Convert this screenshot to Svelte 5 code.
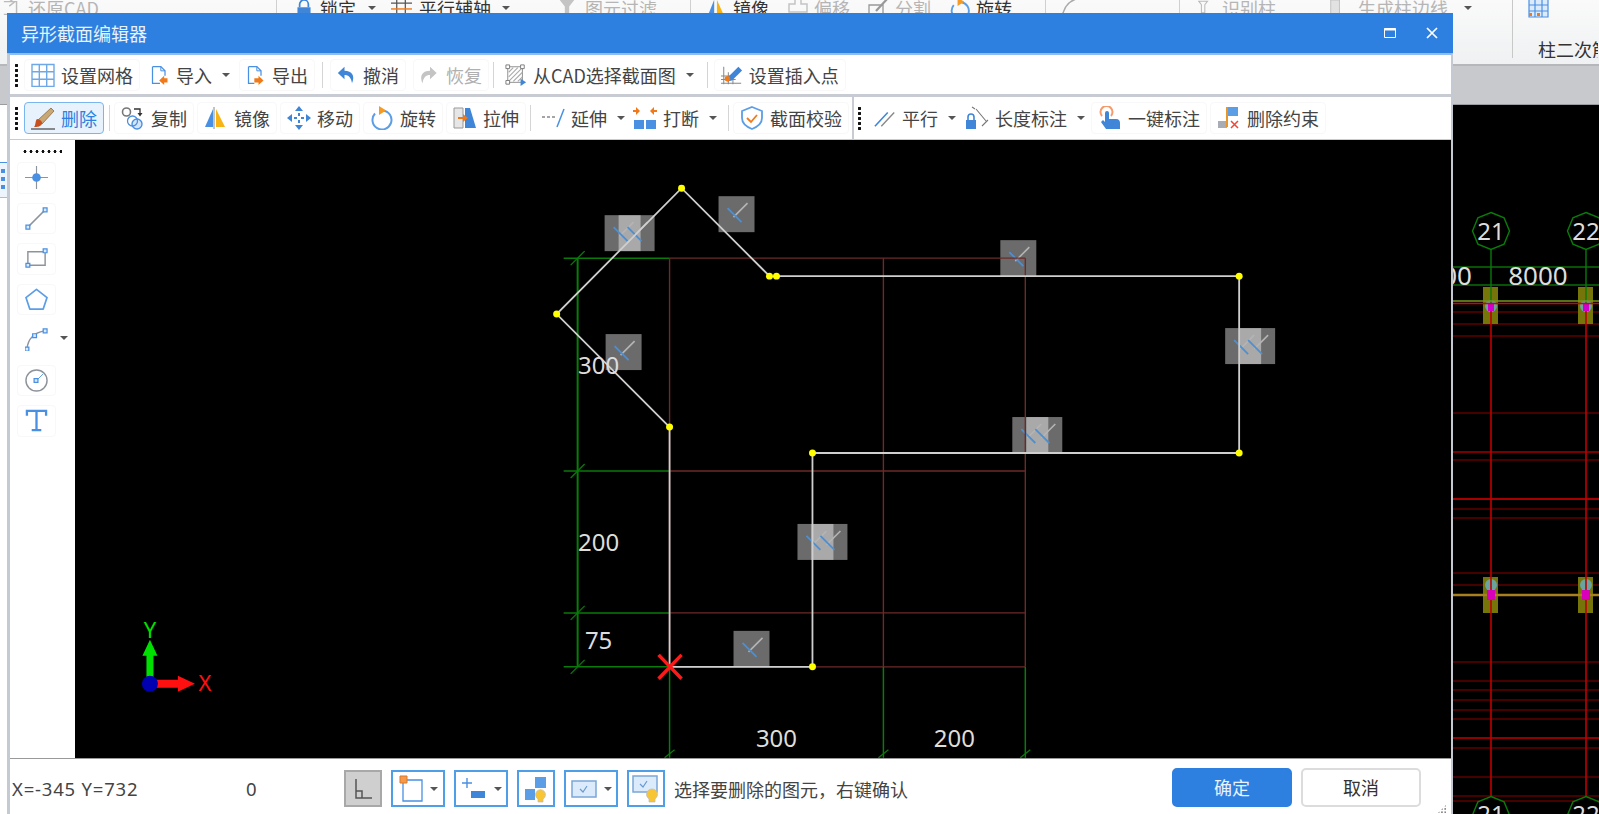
<script>
  // toolbar rows: sep / grip entries are layout only
  const row1 = [
    { t: 'grip' },
    { icon: 'grid', w: 24, label: '设置网格' },
    { icon: 'import', w: 20, label: '导入', caret: true },
    { icon: 'export', w: 20, label: '导出', ml: -1 },
    { t: 'sep', m: 4 },
    { icon: 'undo', w: 20, label: '撤消' },
    { icon: 'redo', w: 20, label: '恢复', off: true, ml: 4 },
    { t: 'sep', m: 1 },
    { icon: 'cad', w: 22, label: '从CAD选择截面图', caret: true },
    { t: 'sep', m: 3 },
    { icon: 'insert', w: 22, label: '设置插入点' }
  ];

  const row2 = [
    { t: 'grip' },
    { icon: 'brush', w: 24, label: '删除', active: true },
    { t: 'sep', m: 1.5 },
    { icon: 'copy', w: 24, label: '复制' },
    { icon: 'mirror', w: 24, label: '镜像' },
    { icon: 'move', w: 24, label: '移动' },
    { icon: 'rotate', w: 24, label: '旋转' },
    { icon: 'stretch', w: 24, label: '拉伸' },
    { t: 'sep', m: 1 },
    { icon: 'extend', w: 24, label: '延伸', caret: true, tight: true, ml: -1 },
    { icon: 'break', w: 24, label: '打断', caret: true, ml: -3 },
    { t: 'sep', m: 1 },
    { icon: 'shield', w: 24, label: '截面校验' },
    { t: 'bar' },
    { t: 'grip' },
    { icon: 'parallel', w: 22, label: '平行', caret: true, tight: true },
    { icon: 'length', w: 24, label: '长度标注', caret: true, tight: true, ml: -2 },
    { icon: 'touch', w: 24, label: '一键标注', ml: 2 },
    { icon: 'unbind', w: 24, label: '删除约束' }
  ];

  const sideTools = ['point', 'line', 'rect', 'polygon', 'arc', 'circle', 'text'];

  // ribbon cells: w is the cell width, up to the start of the next one
  const ribbon = [
    { w: 274, icon: 'restore', iw: 20, gap: 6, label: '还原CAD', off: true },
    { w: 20, sep: true },
    { w: 95, icon: 'lock', iw: 16, gap: 8, label: '锁定', caret: true },
    { w: 168, icon: 'axis', iw: 21, gap: 7, label: '平行辅轴', caret: true },
    { w: 131, icon: 'filter', iw: 16, gap: 10, label: '图元过滤', off: true },
    { w: 16, sep: true },
    { w: 81, icon: 'mirror', iw: 20, gap: 7, label: '镜像' },
    { w: 81, icon: 'offset', iw: 22, gap: 5, label: '偏移', off: true },
    { w: 81, icon: 'split', iw: 22, gap: 5, label: '分割', off: true },
    { w: 96, icon: 'turn', iw: 21, gap: 6, label: '旋转' },
    { w: 15, sep: true },
    { w: 119, icon: 'curve', iw: 22, gap: 0, label: '' },
    { w: 19, sep: true },
    { w: 132, icon: 'pillar', iw: 15, gap: 9, label: '识别柱', off: true },
    { w: 140, icon: 'edge', iw: 16, gap: 12, label: '生成柱边线', off: true, caret: true }
  ];

  // constraint markers, top-left corners in page coordinates
  const marks = [
    [604, 215], [618, 215], [718, 196], [605, 334], [1000, 240], [1225, 328], [1239, 328],
    [1012, 417], [1026, 417], [797, 524], [811, 524], [733, 631]
  ];
  const nodes = [
    [681, 188], [556, 314], [669, 427], [769, 276], [776, 276],
    [1239, 276], [1239, 453], [812, 453], [812, 667]
  ];
  const dimY = [258, 471, 613, 667];
  const dimX = [669, 883, 1025];
  const dims = [
    { x: 598, y: 374, s: '300' }, { x: 598, y: 551, s: '200' }, { x: 598, y: 649, s: '75' },
    { x: 776, y: 747, s: '300' }, { x: 954, y: 747, s: '200' }
  ];

  const cadLines = [
    { y: 267, c: '#0a6e0a', w: 1.4 }, { y: 285, c: '#0a6e0a', w: 1.4 }, { y: 312, c: '#8a0000', w: 1.2 },
    { y: 324, c: '#8a0000', w: 1.2 }, { y: 336, c: '#8a0000', w: 1.2 }, { y: 413, c: '#8a0000', w: 1.2 },
    { y: 452, c: '#a00000', w: 1.6 }, { y: 460, c: '#8a0000', w: 1.2 }, { y: 499, c: '#a80000', w: 2 },
    { y: 509, c: '#8a0000', w: 1.2 }, { y: 518, c: '#8a0000', w: 1.2 }, { y: 573, c: '#8a0000', w: 1.2 },
    { y: 585, c: '#8a0000', w: 1.2 }, { y: 662, c: '#8a0000', w: 1.2 }, { y: 681, c: '#8a0000', w: 1.2 },
    { y: 690, c: '#8a0000', w: 1.2 }, { y: 700, c: '#8a0000', w: 1.2 }, { y: 710, c: '#8a0000', w: 1.2 },
    { y: 719, c: '#8a0000', w: 1.2 }, { y: 738, c: '#c00000', w: 1.6 }, { y: 748, c: '#8a0000', w: 1.2 },
    { y: 777, c: '#8a0000', w: 1.2 }, { y: 796, c: '#8a0000', w: 1.2 }, { y: 801, c: '#8a0000', w: 1.2 }
  ];
  const columns = [1491, 1586];

  function octagon(cx, cy, r) {
    const pts = [];
    for (let i = 0; i < 8; i++) {
      const a = -Math.PI / 2 + (i * Math.PI) / 4;
      pts.push(`${(cx + r * Math.cos(a)).toFixed(1)},${(cy + r * Math.sin(a)).toFixed(1)}`);
    }
    return pts.join(' ');
  }
</script>

{#snippet ribbonIcon(name)}
  <svg class="ribbon-ico" viewBox="0 0 22 22" aria-hidden="true">
    {#if name === 'restore'}
      <path d="M2 4h14v14H2M8 1l5 4-5 4" fill="none" stroke="#bbb" stroke-width="1.6" />
    {:else if name === 'lock'}
      <path d="M5 10V6a6 6 0 0 1 12 0v4" fill="none" stroke="#3f86d8" stroke-width="2.4" />
      <path d="M2 10h18v12H2z" fill="#3f86d8" />
    {:else if name === 'axis'}
      <path d="M6 0v22M15 0v22M0 6h22" stroke="#555" stroke-width="1.3" />
      <path d="M0 12h22" stroke="#f07a1a" stroke-width="1.5" />
    {:else if name === 'filter'}
      <path d="M1 0h20l-7 9v13H8V9z" fill="#c4c4c4" />
    {:else if name === 'mirror'}
      <path d="M9 2v20H1z" fill="#4a90e2" />
      <path d="M12 2v20h9z" fill="#f8b315" />
    {:else if name === 'offset'}
      <path d="M8 1h6v6h6v8H2V7h6z" fill="none" stroke="#c4c4c4" stroke-width="1.5" />
    {:else if name === 'split'}
      <path d="M1 8h14v10H1z" fill="none" stroke="#999" stroke-width="1.3" />
      <path d="M8 14 20 1" stroke="#999" stroke-width="2.2" />
    {:else if name === 'turn'}
      <path d="M13 5a9 9 0 1 1-8 3" fill="none" stroke="#5b9ee6" stroke-width="2" />
      <path d="M9 0l7 4.500L9 9z" fill="#f59a23" />
    {:else if name === 'curve'}
      <path d="M2 22C3 10 9 3 20 1" fill="none" stroke="#aaa" stroke-width="1.5" />
    {:else if name === 'pillar'}
      <path d="M1 1h13l-4 5v12H5V6z" fill="none" stroke="#bbb" stroke-width="1.5" />
    {:else if name === 'edge'}
      <path d="M1 0h12v20H1z" fill="#e2e2e2" stroke="#bbb" stroke-width="1.2" />
    {/if}
  </svg>
{/snippet}

{#snippet icon(name)}
  <svg class="ico" viewBox="0 0 24 24" aria-hidden="true">
    {#if name === 'grid'}
      <path d="M1 1.500h22v22H1zM8.300 1.500v22M15.700 1.500v22M1 8.800h22M1 16.200h22" fill="none" stroke="#6ea8e6" stroke-width="1.4" />
    {:else if name === 'import'}
      <path d="M3 2h10l5 5v6M3 2v20h9" fill="none" stroke="#4a90e2" stroke-width="1.5" />
      <path d="M13 2v5h5" fill="none" stroke="#4a90e2" stroke-width="1.2" />
      <path d="M21 16h-4v-3l-6 5.500 6 5.500v-3h4z" fill="#f07a1a" />
    {:else if name === 'export'}
      <path d="M3 2h10l5 5v6M3 2v20h7" fill="none" stroke="#4a90e2" stroke-width="1.5" />
      <path d="M13 2v5h5" fill="none" stroke="#4a90e2" stroke-width="1.2" />
      <path d="M10 16h5v-3l6 5.500-6 5.500v-3h-5z" fill="#f07a1a" />
    {:else if name === 'undo'}
      <path d="M9 2 1 9.500 9 17v-5c5 0 8 3 9 10 4-9 0-15-9-15z" fill="#3f86d8" />
    {:else if name === 'redo'}
      <path d="M12 2l8 7.500-8 7.500v-5c-5 0-8 3-9 10-4-9 0-15 9-15z" fill="#c4c4c4" />
    {:else if name === 'cad'}
      <path d="M3 3h16v17H3z" fill="none" stroke="#888" stroke-width="1" />
      <path d="M4 9l5-5M4 14l10-10M4 19 19 4M9 19l10-10M14 19l5-5" stroke="#aaa" stroke-width="1.2" />
      <path d="M1 1h4v4H1zM17 1h4v4h-4zM1 18h4v4H1z" fill="#fff" stroke="#777" stroke-width="1" />
      <path d="M17 16l6 4-6 4z" fill="#3f86d8" />
    {:else if name === 'insert'}
      <path d="M3 3v19M8 9v13M13 14v8M0 21h22M0 17h16M0 13h10" stroke="#888" stroke-width="1.1" />
      <path d="M8 14 19 3l4 4-11 11-5 1z" fill="#3f86d8" />
      <circle cx="7" cy="16" r="3" fill="#f07a1a" />
    {:else if name === 'brush'}
      <path d="M7 14 20 2l3 3-12 13z" fill="#c9a877" stroke="#8b6b3a" stroke-width=".8" />
      <path d="M6 13c3 0 6 3 5 5-2 3-5 3-8 3 2-2 1-6 3-8z" fill="#c8501e" />
      <path d="M0 23h24" stroke="#444" stroke-width="1.2" />
    {:else if name === 'copy'}
      <circle cx="5.500" cy="6" r="4" fill="none" stroke="#777" stroke-width="1.6" />
      <circle cx="16" cy="18" r="5" fill="#d5e6f8" stroke="#4a90e2" stroke-width="1.4" />
      <circle cx="11.500" cy="15" r="5" fill="none" stroke="#4a90e2" stroke-width="1.3" />
      <path d="M13 3h6v5" fill="none" stroke="#333" stroke-width="1.3" />
      <path d="M16.500 7h5L19 10.500z" fill="#333" />
    {:else if name === 'mirror'}
      <path d="M10 1v22" stroke="#888" stroke-width="1" />
      <path d="M9 3v18H1z" fill="#4a90e2" />
      <path d="M12 3v18h9z" fill="#f8b315" />
    {:else if name === 'move'}
      <path d="M12 0l4 5H8zM12 24l4-5H8zM0 12l5-4v8zM24 12l-5-4v8z" fill="#3f86d8" />
      <path d="M12 7v3M12 14v3M7 12h3M14 12h3" stroke="#3f86d8" stroke-width="2" />
    {:else if name === 'rotate'}
      <path d="M13 4.500a9.500 9.500 0 1 1-8 3" fill="none" stroke="#5b9ee6" stroke-width="2" />
      <path d="M9 0l7 4.500L9 9z" fill="#f59a23" />
    {:else if name === 'stretch'}
      <path d="M1 2h9v20H1z" fill="#e6e6e6" stroke="#999" stroke-width="1" />
      <path d="M12 2h5l6 20H12z" fill="#3f86d8" />
      <path d="M5 12h6" stroke="#f07a1a" stroke-width="2" />
      <path d="M10 8l5 4-5 4z" fill="#f07a1a" />
    {:else if name === 'extend'}
      <path d="M1 11h15" stroke="#888" stroke-width="1.3" stroke-dasharray="3 2" />
      <path d="M16 21 23 3" stroke="#4a90e2" stroke-width="1.5" />
    {:else if name === 'break'}
      <path d="M1 14h10v9H1zM13 14h10v9H13z" fill="#4a90e2" />
      <path d="M0 5h3V2l4 4-4 4V7H0zM24 5h-3V2l-4 4 4 4V7h3z" fill="#f07a1a" transform="translate(0 -1)" />
    {:else if name === 'shield'}
      <path d="M12 1l10 4v7c0 6-5 9-10 11C7 21 2 18 2 12V5z" fill="none" stroke="#5b9ee6" stroke-width="1.8" />
      <path d="M7 12l4 4 6-7" fill="none" stroke="#f07a1a" stroke-width="1.8" />
    {:else if name === 'parallel'}
      <path d="M1 21 15 6" stroke="#3f86d8" stroke-width="1.7" />
      <path d="M8 21 22 6" stroke="#888" stroke-width="1.5" />
    {:else if name === 'length'}
      <path d="M1 14h10v9H1z" fill="#3f86d8" />
      <path d="M3 14v-3a3 3 0 0 1 6 0v3" fill="none" stroke="#3f86d8" stroke-width="1.6" />
      <path d="M7 1l3 2M11 3l10 12M17 20l6-6" stroke="#777" stroke-width="1.1" fill="none" />
    {:else if name === 'touch'}
      <path d="M4 10a6 6 0 1 1 9 0" fill="none" stroke="#f59a6a" stroke-width="2" />
      <path d="M7 7a2 2 0 0 1 4 0v6h7c3 0 4 2 4 4v6H8L3 16l2-2 2 2z" fill="#3f86d8" />
    {:else if name === 'unbind'}
      <path d="M1 15h9v7H1z" fill="#a8acb4" />
      <path d="M10 1v20" stroke="#e8962a" stroke-width="2" />
      <path d="M11 1h10v9H11z" fill="#5b9ee6" />
      <path d="M14 15l7 7M21 15l-7 7" stroke="#e84a3a" stroke-width="1.5" />
    {/if}
  </svg>
{/snippet}

{#snippet sideIcon(name)}
  <svg class="side-ico" viewBox="0 0 24 24" aria-hidden="true">
    {#if name === 'point'}
      <path d="M12 0v24M0 12h24" stroke="#8d939b" stroke-width="1.2" />
      <circle cx="12" cy="12" r="4.500" fill="#4a90e2" />
    {:else if name === 'line'}
      <path d="M3 21 21 3" stroke="#8d939b" stroke-width="1.5" />
      <path d="M1 19h4v4H1zM19 1h4v4h-4z" fill="#dcebfb" stroke="#4a90e2" stroke-width="1.3" />
    {:else if name === 'rect'}
      <path d="M3 5h18v14H3z" fill="none" stroke="#8d939b" stroke-width="1.5" />
      <path d="M1 17h4v4H1zM19 2h4v4h-4z" fill="#dcebfb" stroke="#4a90e2" stroke-width="1.3" />
    {:else if name === 'polygon'}
      <path d="M12 1.500 23 10l-4 12H5L1 10z" fill="none" stroke="#5b9ee6" stroke-width="1.8" stroke-linejoin="round" />
    {:else if name === 'arc'}
      <path d="M2 22C3 12 9 5 20 3" fill="none" stroke="#8d939b" stroke-width="1.5" />
      <path d="M0 20h4v4H0zM8 6h4v4H8zM19 1h4v4h-4z" fill="#dcebfb" stroke="#4a90e2" stroke-width="1.3" />
    {:else if name === 'circle'}
      <circle cx="12" cy="12" r="11" fill="none" stroke="#8d939b" stroke-width="1.5" />
      <path d="M12 12l7-7" stroke="#5b9ee6" stroke-width="1" />
      <path d="M9.500 10h4v4h-4z" fill="#dcebfb" stroke="#4a90e2" stroke-width="1.3" />
    {:else if name === 'text'}
      <path d="M2 7V2h20v5M12 2v20M7 22h10" fill="none" stroke="#4a90e2" stroke-width="2.4" />
    {/if}
  </svg>
{/snippet}

{#snippet toolbar(items)}
  {#each items as item}
    {#if item.t === 'grip'}
      <span class="grip"></span>
    {:else if item.t === 'sep'}
      <span class="sep" style="margin: 0 {item.m}px"></span>
    {:else if item.t === 'bar'}
      <span class="bar"></span>
    {:else}
      <div
        class="tool"
        class:active={item.active}
        class:off={item.off}
        class:plain={item.caret}
        class:tight={item.tight}
        style="margin-left: {item.ml || 0}px"
      >
        <span class="tool-icon" style="width: {item.w}px">{@render icon(item.icon)}</span>
        <span>{item.label}</span>
        {#if item.caret}<span class="caret"></span>{/if}
      </div>
    {/if}
  {/each}
{/snippet}

<div class="screen">
  <!-- application behind the dialog -->
  <header class="ribbon">
    <div class="ribbon-row">
      {#each ribbon as r}
        {#if r.sep}
          <span class="ribbon-sep" style="width: {r.w}px"></span>
        {:else}
          <div class="ribbon-item" class:off={r.off} style="width: {r.w}px; gap: {r.gap}px">
            <span class="ribbon-icon" style="width: {r.iw}px">{@render ribbonIcon(r.icon)}</span>
            <span>{r.label}</span>
            {#if r.caret}<span class="caret"></span>{/if}
          </div>
        {/if}
      {/each}
      <div class="ribbon-right">
        <svg width="22" height="18" viewBox="0 0 22 18" aria-hidden="true">
          <path d="M1 0v17h19V0M1 5h19M1 11h19M7 0v17M14 0v17" fill="#dcebfb" stroke="#4a90e2" stroke-width="1.2" />
          <path d="M9 13h3v3H9zM1 13h3v3H1z" fill="#f07a1a" />
        </svg>
        <span class="ribbon-label">柱二次筋</span>
      </div>
    </div>
  </header>
  <div class="band"></div>
  <main class="main">
    <aside class="strip">
      <div class="strip-panel"><i></i><i></i><i></i></div>
    </aside>
    <svg class="cad" viewBox="1452 105 147 709" aria-hidden="true">
      {#each cadLines as l}
        <line x1="1452" x2="1599" y1={l.y} y2={l.y} stroke={l.c} stroke-width={l.w} />
      {/each}
      {#each columns as x}
        <rect x={x - 8} y="287" width="15" height="37" fill="#75750a" />
        <rect x={x - 8} y="577" width="15" height="36" fill="#75750a" />
        <circle cx={x} cy="306" r="6" fill="#6aa3a0" />
        <circle cx={x} cy="585" r="6" fill="#6aa3a0" />
        <line x1={x} x2={x} y1="249" y2="303" stroke="#0a7a0a" stroke-width="1.4" />
        <line x1={x} x2={x} y1="303" y2="796" stroke="#c00000" stroke-width="1.6" />
        <rect x={x - 3} y="303" width="6" height="8" fill="#d000d0" />
        <polygon points={octagon(x, 231, 18.500)} fill="#000" stroke="#0a7a0a" stroke-width="1.4" />
        <polygon points={octagon(x, 815, 18.500)} fill="#000" stroke="#0a7a0a" stroke-width="1.4" />
      {/each}
      <line x1="1452" x2="1599" y1="301" y2="301" stroke="#6f9a1e" stroke-width="1.4" />
      <line x1="1452" x2="1599" y1="303.500" y2="303.500" stroke="#d80000" stroke-width="1.6" />
      <line x1="1452" x2="1599" y1="595" y2="595" stroke="#a8801e" stroke-width="2.4" />
      {#each columns as x}
        <rect x={x - 4} y="590" width="8" height="10" fill="#d800b8" />
      {/each}
      <text class="cad-text axis" x="1491" y="240">21</text>
      <text class="cad-text axis" x="1586" y="240">22</text>
      <text class="cad-text axis" x="1491" y="823">21</text>
      <text class="cad-text axis" x="1586" y="823">22</text>
      <text class="cad-text span" x="1538" y="285">8000</text>
      <text class="cad-text span" x="1457" y="285">00</text>
    </svg>
  </main>

  <section class="dialog">
    <div class="titlebar">
      <span>异形截面编辑器</span>
      <div class="win-btns">
        <svg width="12" height="10" viewBox="0 0 12 10" aria-hidden="true">
          <path d="M.5 .5h11v9H.5z" fill="none" stroke="#fff" stroke-width="1" />
          <path d="M0 1.500h12" stroke="#fff" stroke-width="2" />
        </svg>
        <svg width="12" height="12" viewBox="0 0 12 12" aria-hidden="true">
          <path d="M1 1l10 10M11 1 1 11" stroke="#fff" stroke-width="1.700" />
        </svg>
      </div>
    </div>
    <div class="content">
      <div class="tb tb1">{@render toolbar(row1)}</div>
      <div class="tb tb2">{@render toolbar(row2)}</div>
      <div class="work">
        <nav class="side">
          <span class="dots"></span>
          {#each sideTools as s}
            <div class="side-tool" class:flat={s === 'arc'}>
              {@render sideIcon(s)}
              {#if s === 'arc'}<span class="caret side-caret"></span>{/if}
            </div>
          {/each}
        </nav>
        <svg class="canvas" viewBox="74 140 1377 618" aria-hidden="true">
          {#each marks as m}
            <rect x={m[0]} y={m[1]} width="36" height="36" fill="#fff" opacity=".42" />
          {/each}
          {#each marks as m}
            <line x1={m[0] + 15} y1={m[1] + 21} x2={m[0] + 29} y2={m[1] + 7} stroke="#b4b4b4" stroke-width="1.6" />
            <line x1={m[0] + 9} y1={m[1] + 12} x2={m[0] + 23} y2={m[1] + 26} stroke="#4f8fd0" stroke-width="1.8" />
          {/each}

          {#each dimY as y}
            <line x1="669" x2="1025" y1={y} y2={y} stroke="#6e2a2a" stroke-width="1.4" />
            <line x1="563" x2="669" y1={y} y2={y} stroke="#0a7a0a" stroke-width="1.5" />
            <line x1="570" y1={y + 7} x2="584" y2={y - 7} stroke="#0a7a0a" stroke-width="1.3" />
          {/each}
          {#each dimX as x}
            <line x1={x} x2={x} y1="258" y2="667" stroke="#6e2a2a" stroke-width="1.4" />
            <line x1={x} x2={x} y1="667" y2="758" stroke="#0a7a0a" stroke-width="1.5" />
            <line x1={x - 5} y1="758" x2={x + 5} y2="750" stroke="#0a7a0a" stroke-width="1.3" />
          {/each}
          <line x1="577" x2="577" y1="258" y2="667" stroke="#0a7a0a" stroke-width="2" />

          <polyline points="669,667 669,427 556,314 681,188 769,276" fill="none" stroke="#cfcfcf" stroke-width="1.8" />
          <polyline points="776,276 1239,276 1239,453 812,453 812,667 669,667" fill="none" stroke="#cfcfcf" stroke-width="1.8" />
          {#each nodes as n}
            <circle cx={n[0]} cy={n[1]} r="3.500" fill="#ffff00" />
          {/each}
          <path d="M658 655l23 24M681 655l-23 24" stroke="#ff1a1a" stroke-width="3.500" />

          {#each dims as d}
            <text class="cad-text dim" x={d.x} y={d.y}>{d.s}</text>
          {/each}

          <path d="M145.500 684V656h-4l7.500-16 7.500 16h-4v28z" fill="#00e000" />
          <path d="M149 680h28v-4l17 8-17 8v-4h-28z" fill="#ff1010" />
          <circle cx="149" cy="684" r="8" fill="#0000b0" />
          <text class="axis-label" x="149" y="638" fill="#00e000">Y</text>
          <text class="axis-label" x="204" y="691" fill="#ff1010">X</text>
        </svg>
      </div>
      <footer class="status">
        <span class="coords">X=-345 Y=732</span>
        <span class="zero">0</span>
        <div class="status-btns">
          <div class="sbtn pressed narrow">
            <svg width="20" height="22" viewBox="0 0 20 22" aria-hidden="true">
              <path d="M3 1v19h16M3 13h6v7" fill="none" stroke="#555" stroke-width="1.5" />
            </svg>
          </div>
          <div class="sbtn">
            <svg width="24" height="28" viewBox="0 0 24 28" aria-hidden="true">
              <path d="M4 5h19v21H4z" fill="none" stroke="#4a90e2" stroke-width="1.3" />
              <path d="M1 1h7v7H1z" fill="#f59a4a" stroke="#d87a2a" stroke-width="1" />
            </svg>
            <span class="caret"></span>
          </div>
          <div class="sbtn">
            <svg width="26" height="26" viewBox="0 0 26 26" aria-hidden="true">
              <path d="M6 2v10M1 7h10" stroke="#4a90e2" stroke-width="1.4" />
              <path d="M10 15h14v7H10z" fill="#3f86d8" />
            </svg>
            <span class="caret"></span>
          </div>
          <div class="sbtn narrow">
            <svg width="26" height="28" viewBox="0 0 26 28" aria-hidden="true">
              <path d="M12 2h11v11H12zM2 14h10v11H2z" fill="#5b9ee6" />
              <path d="M15 24a5 5 0 1 1 5 0v3h-5z" fill="#f8c534" stroke="#bbb" stroke-width=".7" />
            </svg>
          </div>
          <div class="sbtn">
            <svg width="26" height="20" viewBox="0 0 26 20" aria-hidden="true">
              <path d="M1 2h24v16H1z" fill="#dcebfb" stroke="#7aa7d8" stroke-width="1.5" />
              <path d="M9 10l3 3 4-6" fill="none" stroke="#6a9ad0" stroke-width="1.2" />
            </svg>
            <span class="caret"></span>
          </div>
          <div class="sbtn narrow">
            <svg width="28" height="30" viewBox="0 0 28 30" aria-hidden="true">
              <path d="M1 2h24v16H1z" fill="#dcebfb" stroke="#7aa7d8" stroke-width="1.5" />
              <path d="M8 10l3 3 4-6" fill="none" stroke="#6a9ad0" stroke-width="1.2" />
              <path d="M17 25a5.500 5.500 0 1 1 6 0v3h-6z" fill="#f8c534" stroke="#bbb" stroke-width=".7" />
            </svg>
          </div>
        </div>
        <span class="hint">选择要删除的图元，右键确认</span>
        <div class="actions">
          <button class="btn primary" type="button">确定</button>
          <button class="btn" type="button">取消</button>
        </div>
        <span class="resize"></span>
      </footer>
    </div>
  </section>
</div>

<style>
  :global(body) {
    margin: 0;
    overflow: hidden;
  }

  .screen {
    position: relative;
    width: 1599px;
    height: 814px;
    overflow: hidden;
    display: flex;
    flex-direction: column;
    background: #fff;
    font-family: 'Noto Sans CJK SC', 'Noto Sans', sans-serif;
    font-size: 18px;
    color: #444;
  }

  /* ribbon behind the dialog, mostly hidden */
  .ribbon {
    flex: 0 0 66px;
    box-sizing: border-box;
    overflow: hidden;
    background: linear-gradient(#fafafa, #eff1f2);
    border-bottom: 2px solid #b5b7ba;
  }

  .ribbon-row {
    display: flex;
    align-items: flex-start;
    padding-left: 2px;
    height: 64px;
  }

  .ribbon-item {
    flex: none;
    display: flex;
    align-items: center;
    margin-top: -5px;
    height: 26px;
    color: #333;
    white-space: nowrap;
  }

  .ribbon-item.off {
    color: #b5b5b5;
  }

  .ribbon-icon {
    flex: none;
  }

  .ribbon-ico {
    display: block;
    width: 100%;
    height: 22px;
  }

  .ribbon-sep {
    flex: none;
    box-sizing: border-box;
    height: 30px;
    border-left: 1px solid #d0d0d0;
  }

  .ribbon-right {
    flex: none;
    align-self: stretch;
    width: 86px;
    margin: 0 0 6px 42px;
    box-sizing: border-box;
    border-left: 1px solid #c8c8c8;
    padding-left: 15px;
    overflow: hidden;
  }

  .ribbon-right svg {
    display: block;
  }

  .ribbon-label {
    display: block;
    margin: 19px 0 0 10px;
    line-height: 24px;
    white-space: nowrap;
    color: #333;
  }

  .band {
    flex: 0 0 39px;
    background: #c7c9cc;
    border-bottom: 1px solid #9a9c9f;
    box-sizing: border-box;
  }

  .main {
    flex: 1;
    display: flex;
    min-height: 0;
  }

  .strip {
    flex: 0 0 1452px;
    background: #fff;
  }

  .strip-panel {
    margin-top: 57px;
    width: 7px;
    height: 36px;
    box-sizing: border-box;
    border-top: 1px solid #4a90e2;
    border-bottom: 1px solid #bbb;
    display: flex;
    flex-direction: column;
    gap: 4px;
    padding-top: 6px;
    background: #eef4fb;
  }

  .strip-panel i {
    width: 4px;
    height: 4px;
    margin-left: 1px;
    background: #4a90e2;
  }

  .cad {
    flex: 1;
    display: block;
    background: #000;
  }

  .cad-text {
    font-family: 'Noto Sans', sans-serif;
    text-anchor: middle;
    fill: #ddd;
  }

  .cad-text.axis {
    font-size: 24px;
  }

  .cad-text.span {
    font-size: 26px;
  }

  .cad-text.dim {
    font-size: 24px;
  }

  .axis-label {
    font-family: 'Noto Sans', sans-serif;
    font-size: 22px;
    text-anchor: middle;
  }

  /* dialog */
  .dialog {
    position: absolute;
    left: 7px;
    top: 13px;
    width: 1446px;
    height: 801px;
    display: flex;
    flex-direction: column;
  }

  .titlebar {
    flex: 0 0 40px;
    display: flex;
    align-items: center;
    justify-content: space-between;
    box-sizing: border-box;
    padding: 0 15px 0 14px;
    background: #2d7fe0;
    color: #e8f2fc;
  }

  .win-btns {
    display: flex;
    align-items: center;
    gap: 30px;
  }

  .content {
    flex: 1;
    display: flex;
    flex-direction: column;
    min-height: 0;
    box-sizing: border-box;
    border-left: 3px solid #c5cad2;
    border-right: 2px solid #c5cad2;
    background: #fff;
    border-top: 2px solid #8fbdf0;
  }

  .tb {
    display: flex;
    align-items: center;
    gap: 3px;
    box-sizing: border-box;
    padding-left: 5px;
    background: #fff;
  }

  .tb1 {
    flex: 0 0 42px;
    border-bottom: 3px solid #c8ccd2;
  }

  .tb2 {
    flex: 0 0 43px;
    border-bottom: 1px solid #c8ccd2;
  }

  .tool {
    display: flex;
    align-items: center;
    gap: 6px;
    box-sizing: border-box;
    height: 32px;
    padding: 0 6px;
    border: 1px solid #f8f8f8;
    border-radius: 4px;
    white-space: nowrap;
  }

  .tool.plain {
    border-color: transparent;
  }

  .tool.tight {
    padding-right: 0;
  }

  .tool.active {
    color: #2d7fe0;
    background: #e8f2fc;
    border-color: #7ab5ee;
  }

  .tool.off {
    color: #b0b0b0;
  }

  .tool-icon {
    display: flex;
    justify-content: center;
  }

  .ico {
    display: block;
    width: 100%;
    height: 24px;
  }

  .caret {
    flex: none;
    width: 0;
    height: 0;
    margin-left: 4px;
    border-left: 4px solid transparent;
    border-right: 4px solid transparent;
    border-top: 4px solid #555;
  }

  .grip {
    width: 3px;
    height: 24px;
    margin-right: 3px;
    background-image: radial-gradient(circle, #111 1.4px, transparent 1.6px);
    background-size: 3px 5px;
    flex: none;
  }

  .sep {
    width: 1px;
    height: 26px;
    background: #d5d5d5;
    flex: none;
  }

  .bar {
    width: 2px;
    align-self: stretch;
    margin: 0 1px 0 0;
    background: #c8ccd2;
    flex: none;
  }

  .work {
    flex: 1;
    display: flex;
    min-height: 0;
  }

  .side {
    flex: 0 0 65px;
    display: flex;
    flex-direction: column;
    align-items: flex-start;
    gap: 9px;
    box-sizing: border-box;
    padding: 10px 0 0 7px;
    background: #fff;
  }

  .dots {
    width: 40px;
    height: 3px;
    margin: 0 0 0 5px;
    background-image: radial-gradient(circle, #111 1.4px, transparent 1.6px);
    background-size: 6px 3px;
  }

  .side-tool {
    position: relative;
    display: flex;
    align-items: center;
    justify-content: center;
    box-sizing: border-box;
    width: 39px;
    height: 31.500px;
    border: 1px solid #f8f8f8;
    border-radius: 4px;
  }

  .side-tool.flat {
    border-color: transparent;
  }

  .side-ico {
    width: 23px;
    height: 23px;
  }

  .side-caret {
    position: absolute;
    left: 38px;
    top: 11px;
  }

  .canvas {
    flex: 1;
    min-width: 0;
    display: block;
    background: #000;
  }

  .status {
    position: relative;
    flex: 0 0 56px;
    display: flex;
    align-items: center;
    padding-top: 4px;
    background: #fff;
    border-top: 1px solid #999;
    box-sizing: border-box;
    font-family: 'Noto Sans', 'Noto Sans CJK SC', sans-serif;
    font-size: 18.500px;
    white-space: nowrap;
  }

  .coords {
    flex: 0 0 236px;
    padding-left: 2px;
    box-sizing: border-box;
    letter-spacing: .8px;
  }

  .zero {
    flex: 0 0 98px;
  }

  .status-btns {
    display: flex;
    gap: 9px;
  }

  .sbtn {
    display: flex;
    align-items: center;
    justify-content: center;
    gap: 3px;
    box-sizing: border-box;
    width: 54px;
    height: 37px;
    border: 2px solid #4f9fe8;
    background: #fff;
  }

  .sbtn.narrow {
    width: 38px;
  }

  .sbtn.pressed {
    background: #cfcfcf;
    border-color: #a8a8a8;
  }

  .hint {
    margin-left: 9px;
    font-family: 'Noto Sans CJK SC', sans-serif;
    font-size: 18px;
  }

  .actions {
    margin: -3px 30px 0 auto;
    display: flex;
    gap: 9px;
  }

  .btn {
    width: 120px;
    height: 39px;
    padding: 0;
    font: inherit;
    font-family: 'Noto Sans CJK SC', sans-serif;
    font-size: 18px;
    color: #333;
    background: #fff;
    border: 2px solid #dcdcdc;
    border-radius: 5px;
  }

  .btn.primary {
    color: #e8f2fc;
    background: #2d7fe0;
    border-color: #2d7fe0;
  }

  .resize {
    position: absolute;
    right: 4px;
    bottom: 0;
    width: 10px;
    height: 10px;
    background-image: radial-gradient(circle, #888 1px, transparent 1.3px);
    background-size: 3.300px 3.300px;
    clip-path: polygon(100% 0, 100% 100%, 0 100%);
  }
</style>
